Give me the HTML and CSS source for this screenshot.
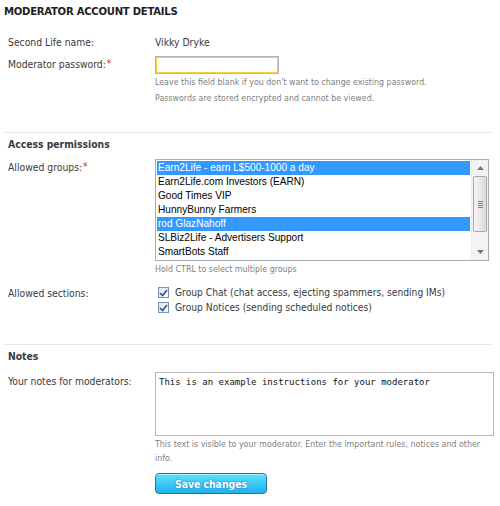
FILE: index.html
```html
<!DOCTYPE html>
<html lang="en">
<head>
<meta charset="utf-8">
<title>Moderator account details</title>
<link rel="stylesheet" href="styles.css">
</head>
<body>
<div class="page">
  <h1 class="title">MODERATOR ACCOUNT DETAILS</h1>

  <section class="block block-account">
    <div class="row row-plain">
      <div class="label">Second Life name:</div>
      <div class="field">Vikky Dryke</div>
    </div>
    <div class="row row-pass">
      <div class="label">Moderator password:<span class="req">*</span></div>
      <div class="field">
        <div class="text-input"><input type="password" class="pass" value=""></div>
        <p class="help">Leave this field blank if you don't want to change existing password.</p>
        <p class="help">Passwords are stored encrypted and cannot be viewed.</p>
      </div>
    </div>
  </section>

  <section class="block block-sep block-access">
    <h2 class="block-title">Access permissions</h2>
    <div class="row row-groups">
      <div class="label">Allowed groups:<span class="req">*</span></div>
      <div class="field">
        <div class="listbox" role="listbox" aria-multiselectable="true">
          <ul class="options">
            <li class="opt selected">Earn2Life - earn L$500-1000 a day</li>
            <li class="opt">Earn2Life.com Investors (EARN)</li>
            <li class="opt">Good Times VIP</li>
            <li class="opt">HunnyBunny Farmers</li>
            <li class="opt selected">rod GlazNahoff</li>
            <li class="opt">SLBiz2Life - Advertisers Support</li>
            <li class="opt">SmartBots Staff</li>
          </ul>
          <div class="vscroll">
            <div class="sb-btn sb-up"><svg width="7" height="4" viewBox="0 0 7 4"><path d="M0 4 L3.5 0 L7 4Z" fill="#777"/></svg></div>
            <div class="sb-track">
              <div class="sb-thumb"><span class="grip"></span><span class="grip"></span><span class="grip"></span><span class="grip"></span></div>
            </div>
            <div class="sb-btn sb-down"><svg width="7" height="4" viewBox="0 0 7 4"><path d="M0 0 L3.5 4 L7 0Z" fill="#777"/></svg></div>
          </div>
        </div>
        <p class="help help-list">Hold CTRL to select multiple groups</p>
      </div>
    </div>
    <div class="row row-sections">
      <div class="label">Allowed sections:</div>
      <div class="field">
        <label class="check"><span class="box"><svg width="9" height="8" viewBox="0 0 9 8"><path d="M1 4 L3.5 6.5 L8 1" fill="none" stroke="#2a4f9c" stroke-width="1.6"/></svg></span>Group Chat (chat access, ejecting spammers, sending IMs)</label>
        <label class="check"><span class="box"><svg width="9" height="8" viewBox="0 0 9 8"><path d="M1 4 L3.5 6.5 L8 1" fill="none" stroke="#2a4f9c" stroke-width="1.6"/></svg></span>Group Notices (sending scheduled notices)</label>
      </div>
    </div>
  </section>

  <section class="block block-sep block-notes">
    <h2 class="block-title">Notes</h2>
    <div class="row row-notes">
      <div class="label">Your notes for moderators:</div>
      <div class="field">
        <textarea class="notes">This is an example instructions for your moderator</textarea>
        <p class="help help-notes">This text is visible to your moderator. Enter the important rules, notices and other info.</p>
        <button type="button" class="save">Save changes</button>
      </div>
    </div>
  </section>
</div>
</body>
</html>
```
FILE: styles.css
```css
html, body {
  margin: 0;
  padding: 0;
  background: #fff;
}

body {
  font-family: "DejaVu Sans Condensed", "DejaVu Sans", sans-serif;
  font-stretch: condensed;
  font-size: 10.3px;
  color: #3a3a3a;
}

.page {
  width: 500px;
  padding: 0 0 0 4px;
  box-sizing: border-box;
}

.title {
  margin: 0;
  padding-top: 4px;
  font-size: 11.2px;
  line-height: 16px;
  letter-spacing: -0.25px;
  font-weight: bold;
  color: #1e1e1e;
}

.block {
  padding-left: 4px;
}

.block-sep {
  margin-right: 8px;
  border-top: 1px solid #e3e9f0;
}

.block-title {
  margin: 0;
  padding-top: 3px;
  font-size: 10.3px;
  line-height: 16px;
  font-weight: bold;
  color: #3a3a3a;
}

.row {
  display: grid;
  grid-template-columns: 147px 1fr;
}

.label {
  line-height: 16px;
}

.req {
  color: #d22;
  font-size: 10px;
  vertical-align: top;
  margin-left: 1px;
}

.field {
  line-height: 16px;
}

.help {
  margin: 0;
  font-size: 8.8px;
  line-height: 16px;
  color: #808080;
}

/* account block */
.block-account {
  padding-bottom: 26px;
}

.row-plain {
  margin-top: 14px;
}

.row-pass {
  margin-top: 6px;
}

.text-input {
  width: 124px;
  height: 18px;
  box-sizing: border-box;
  border: 1px solid #b5b5b5;
}

.pass {
  display: block;
  width: 100%;
  height: 100%;
  box-sizing: border-box;
  border: 1px solid #f5d03a;
  margin: 0;
  padding: 0;
  outline: none;
}

/* access permissions */
.block-access {
  padding-bottom: 29px;
}

.row-groups {
  margin-top: 7px;
}

.listbox {
  display: flex;
  width: 334px;
  height: 102px;
  box-sizing: border-box;
  border: 1px solid #a5acb5;
  background: #fff;
}

.options {
  flex: 1;
  margin: 0;
  padding: 1px 1px 0 1px;
  list-style: none;
  font-family: "Liberation Sans", Arial, sans-serif;
  font-stretch: normal;
  font-size: 10.1px;
  color: #000;
}

.opt {
  height: 14px;
  line-height: 14px;
  padding-left: 1px;
  white-space: nowrap;
}

.opt.selected {
  background: #3399ff;
  color: #fff;
}

.vscroll {
  width: 16px;
  display: flex;
  flex-direction: column;
  background: #f3f3f3;
  border-left: 1px solid #f0f0f0;
}

.sb-btn {
  height: 16px;
  display: flex;
  align-items: center;
  justify-content: center;
}

.sb-track {
  flex: 1;
  padding: 0 1px;
}

.sb-thumb {
  height: 54px;
  border: 1px solid #a8a8a8;
  border-radius: 2px;
  background: linear-gradient(to right, #f4f4f4, #dcdcdc);
  display: flex;
  flex-direction: column;
  align-items: center;
  justify-content: center;
  gap: 1px;
}

.grip {
  display: block;
  width: 5px;
  height: 1px;
  background: #808080;
}

/* checkboxes */
.row-sections {
  margin-top: 8px;
}

.check {
  display: flex;
  align-items: center;
  height: 15px;
  line-height: 15px;
  font-size: 10.2px;
  color: #3a3a3a;
}

.box {
  width: 11px;
  height: 11px;
  box-sizing: border-box;
  border: 1px solid #7a8fa8;
  background: linear-gradient(135deg, #e4e8ee, #fbfcfd);
  margin: 0 6px 0 3px;
  display: flex;
  align-items: center;
  justify-content: center;
}

/* notes */
.row-notes {
  margin-top: 8px;
}

.row-notes .label {
  padding-top: 1px;
}

.notes {
  display: block;
  width: 339px;
  height: 64px;
  box-sizing: border-box;
  margin: 0;
  padding: 3px;
  border: 1px solid #b9b9b9;
  resize: none;
  font-family: "DejaVu Sans Mono", "Liberation Mono", monospace;
  font-size: 9px;
  line-height: 13px;
  color: #111;
  overflow: hidden;
}

.help-notes {
  margin-top: 1px;
  line-height: 14px;
  width: 338px;
}

.save {
  display: block;
  margin-top: 8px;
  width: 112px;
  height: 21px;
  padding: 0;
  border: 1px solid #2c6db0;
  border-radius: 4px;
  background: linear-gradient(to bottom, #5fe0fb 0%, #3fcdf6 45%, #1fb0ef 100%);
  box-shadow: inset 0 1px 0 rgba(255,255,255,0.5);
  color: #fff;
  font-family: "DejaVu Sans Condensed", "DejaVu Sans", sans-serif;
  font-stretch: condensed;
  font-size: 10.5px;
  letter-spacing: -0.1px;
  font-weight: bold;
  text-shadow: 0 0 2px rgba(0,60,120,0.6);
  cursor: pointer;
}
```
